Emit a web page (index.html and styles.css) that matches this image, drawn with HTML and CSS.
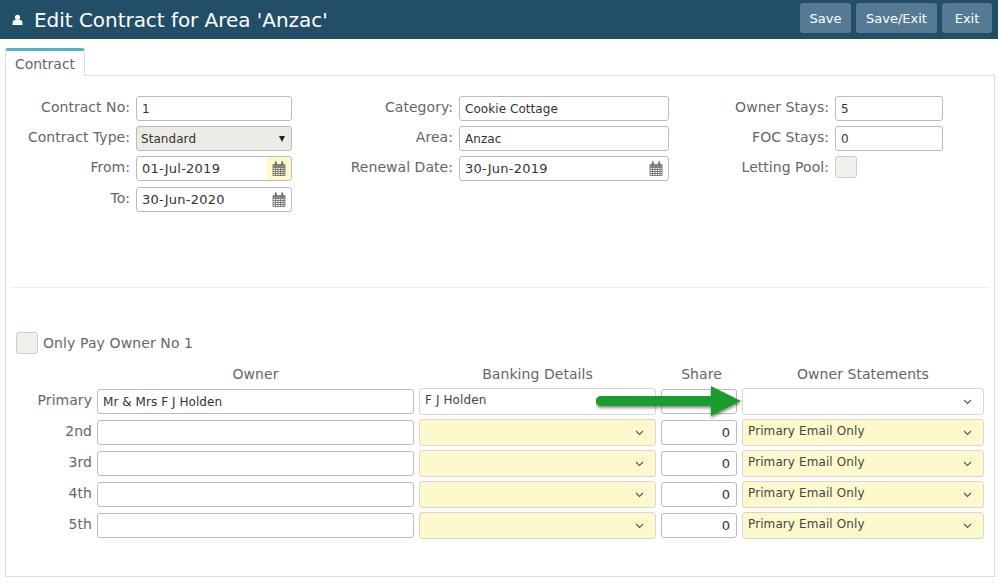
FILE: index.html
```html
<!DOCTYPE html>
<html lang="en">

<head>
    <meta charset="UTF-8">
    <meta name="viewport" content="width=device-width, initial-scale=1.0">
    <title>Edit Contract</title>
    <link rel="stylesheet" href="styles.css">
</head>

<body>
    <svg class="icon-defs" width="0" height="0">
        <symbol id="cal" viewBox="0 0 14 15">
            <path d="M1 3.500h12v11h-12z M1 6.500h12 M1 8.500h12 M1 10.500h12 M1 12.500h12 M3.500 6.500v8 M6 6.500v8 M8.500 6.500v8 M11 6.500v8" fill="none" stroke="#666" stroke-width="0.8" />
            <path d="M1 3.500h12v3h-12z" fill="#888" />
            <path d="M3.800 1.200v2.600 M10.200 1.200v2.600" fill="none" stroke="#666" stroke-width="1.800" stroke-linecap="round" />
        </symbol>
        <symbol id="chev" viewBox="0 0 9 6">
            <path d="M1 1l3.500 3.500L8 1" fill="none" stroke="#555" stroke-width="1.100" />
        </symbol>
    </svg>

    <header class="top-bar">
        <h1 class="page-title">
            <svg class="user-icon" viewBox="0 0 12 12" width="11" height="12">
                <circle cx="6" cy="3" r="2.800" fill="#fff" />
                <path d="M0.600 11.500v-2.600c0-2 1.600-3.200 3-3.200h4.800c1.400 0 3 1.200 3 3.200v2.600z" fill="#fff" />
            </svg>
            Edit Contract for Area 'Anzac'
        </h1>
        <div class="top-actions">
            <button class="btn btn-save">Save</button>
            <button class="btn btn-saveexit">Save/Exit</button>
            <button class="btn btn-exit">Exit</button>
        </div>
    </header>

    <div class="tabs">
        <div class="tab">Contract</div>
    </div>

    <main class="panel">
        <section class="details">
            <div class="form-col col-one">
                <label>Contract No:</label>
                <div class="field">1</div>
                <label>Contract Type:</label>
                <div class="field field-select">Standard<span class="caret"></span></div>
                <label>From:</label>
                <div class="field date-field">01-Jul-2019<span class="cal-box cal-active"><svg width="14" height="15"><use href="#cal" /></svg></span></div>
                <label class="gap-row">To:</label>
                <div class="field date-field gap-row">30-Jun-2020<span class="cal-box"><svg width="14" height="15"><use href="#cal" /></svg></span></div>
            </div>
            <div class="form-col col-two">
                <label>Category:</label>
                <div class="field">Cookie Cottage</div>
                <label>Area:</label>
                <div class="field">Anzac</div>
                <label>Renewal Date:</label>
                <div class="field date-field">30-Jun-2019<span class="cal-box"><svg width="14" height="15"><use href="#cal" /></svg></span></div>
            </div>
            <div class="form-col col-three">
                <label>Owner Stays:</label>
                <div class="field">5</div>
                <label>FOC Stays:</label>
                <div class="field">0</div>
                <label>Letting Pool:</label>
                <div class="checkbox"></div>
            </div>
        </section>

        <hr class="divider">

        <div class="only-pay">
            <div class="checkbox"></div>
            <span>Only Pay Owner No 1</span>
        </div>

        <section class="owners">
            <div></div>
            <div class="col-head">Owner</div>
            <div class="col-head">Banking Details</div>
            <div class="col-head col-head-share">Share</div>
            <div class="col-head">Owner Statements</div>

            <label>Primary</label>
            <div class="field">Mr &amp; Mrs F J Holden</div>
            <div class="drop">F J Holden</div>
            <div class="field share"></div>
            <div class="drop">&nbsp;<svg class="chev" width="9" height="6"><use href="#chev" /></svg></div>

            <label>2nd</label>
            <div class="field"></div>
            <div class="drop drop-req"><svg class="chev" width="9" height="6"><use href="#chev" /></svg></div>
            <div class="field share">0</div>
            <div class="drop drop-req">Primary Email Only<svg class="chev" width="9" height="6"><use href="#chev" /></svg></div>

            <label>3rd</label>
            <div class="field"></div>
            <div class="drop drop-req"><svg class="chev" width="9" height="6"><use href="#chev" /></svg></div>
            <div class="field share">0</div>
            <div class="drop drop-req">Primary Email Only<svg class="chev" width="9" height="6"><use href="#chev" /></svg></div>

            <label>4th</label>
            <div class="field"></div>
            <div class="drop drop-req"><svg class="chev" width="9" height="6"><use href="#chev" /></svg></div>
            <div class="field share">0</div>
            <div class="drop drop-req">Primary Email Only<svg class="chev" width="9" height="6"><use href="#chev" /></svg></div>

            <label>5th</label>
            <div class="field"></div>
            <div class="drop drop-req"><svg class="chev" width="9" height="6"><use href="#chev" /></svg></div>
            <div class="field share">0</div>
            <div class="drop drop-req">Primary Email Only<svg class="chev" width="9" height="6"><use href="#chev" /></svg></div>
        </section>
    </main>

    <!-- annotation arrow over the primary row -->
    <svg class="arrow" viewBox="0 0 150 38" width="150" height="38">
        <defs>
            <filter id="arrow-shadow" x="-10%" y="-30%" width="120%" height="170%">
                <feDropShadow dx="0" dy="2" stdDeviation="1.500" flood-color="#000" flood-opacity="0.450" />
            </filter>
        </defs>
        <path d="M4.800 13h110.200v-10l30 15-30 15v-10h-110.200a5 5 0 0 1 0-10z" fill="#1c9c2f" filter="url(#arrow-shadow)" />
    </svg>
</body>

</html>
```
FILE: styles.css
```css
body {
    margin: 0;
    padding: 0;
    background-color: #fff;
    font-family: "DejaVu Sans", Verdana, sans-serif;
    font-size: 14px;
    color: #666;
    position: relative;
    height: 583px;
    overflow: hidden;
}

.icon-defs {
    position: absolute;
}

.top-bar {
    display: flex;
    justify-content: space-between;
    align-items: flex-start;
    height: 39px;
    background-color: #234e67;
    padding: 3px 6px 0 12px;
    box-sizing: border-box;
}

.page-title {
    margin: 0;
    display: flex;
    align-items: center;
    gap: 11px;
    height: 34px;
    color: #fff;
    font-size: 20px;
    font-weight: normal;
    letter-spacing: -0.04px;
    white-space: nowrap;
}

.top-actions {
    display: flex;
    gap: 5px;
}

.btn {
    height: 30px;
    border: 0;
    border-radius: 3px;
    background-color: #557b94;
    color: #fff;
    font-family: inherit;
    font-size: 13px;
    padding: 0;
}

.btn-save {
    width: 51px;
}

.btn-saveexit {
    width: 81px;
}

.btn-exit {
    width: 50px;
}

.tabs {
    display: flex;
    padding: 9px 0 0 5px;
}

.tab {
    width: 80px;
    height: 28px;
    box-sizing: border-box;
    border: 1px solid #ddd;
    border-top: 3px solid #53b3c0;
    border-bottom: 0;
    border-radius: 3px 3px 0 0;
    background: #fff;
    text-align: center;
    line-height: 26px;
    margin-bottom: -1px;
    position: relative;
}

.panel {
    margin: 0 3px 0 5px;
    height: 502px;
    box-sizing: border-box;
    border: 1px solid #ddd;
}

.details {
    display: flex;
    height: 211px;
    padding-top: 20px;
    box-sizing: border-box;
}

.form-col {
    display: grid;
    align-content: start;
    row-gap: 5px;
    column-gap: 6px;
}

.col-one {
    grid-template-columns: 124px 156px;
}

.col-two {
    grid-template-columns: 161px 210px;
}

.col-three {
    grid-template-columns: 160px 108px;
}

label {
    text-align: right;
    line-height: 23px;
    letter-spacing: 0.04px;
    white-space: nowrap;
}

.gap-row {
    margin-top: 1px;
}

.field {
    height: 25px;
    box-sizing: border-box;
    border: 1px solid #bbb;
    border-radius: 3px;
    background: #fff;
    color: #333;
    font-size: 12px;
    letter-spacing: 0.06px;
    line-height: 24px;
    padding: 0 5px;
    display: flex;
    align-items: center;
    justify-content: space-between;
    overflow: hidden;
}

.field-select {
    background: #ebebe4;
    padding-left: 4px;
}

.caret {
    width: 0;
    height: 0;
    border-left: 3px solid transparent;
    border-right: 3px solid transparent;
    border-top: 6px solid #222;
    margin-right: 1px;
}

.date-field {
    padding-right: 0;
    font-size: 13px;
    letter-spacing: 0.25px;
}

.cal-box {
    width: 24px;
    height: 23px;
    display: flex;
    align-items: center;
    justify-content: center;
}

.cal-active {
    background: #fdf9cd;
}

.checkbox {
    width: 22px;
    height: 22px;
    box-sizing: border-box;
    border: 1px solid #ccc;
    border-radius: 3px;
    background: #f1f1ec;
}

.divider {
    border: 0;
    border-top: 1px solid #eee;
    margin: 0 6px;
    height: 0;
}

.only-pay {
    display: flex;
    align-items: center;
    gap: 5px;
    margin: 44px 0 0 10px;
    letter-spacing: 0.1px;
}

.owners {
    display: grid;
    grid-template-columns: 85px 317px 237px 76px 242px;
    grid-auto-rows: 31px;
    column-gap: 5px;
    align-items: center;
    margin: 1px 0 0 1px;
}

.owners label {
    line-height: 20px;
    margin-bottom: 3px;
}

.col-head {
    text-align: center;
    align-self: end;
    margin-bottom: 4px;
    letter-spacing: 0.05px;
}

.col-head-share {
    padding-left: 5px;
}

.share {
    justify-content: flex-end;
    font-size: 13px;
    padding-right: 6px;
}

.drop {
    height: 27px;
    box-sizing: border-box;
    border: 1px solid #d6d6d6;
    border-radius: 3px;
    background: #fff;
    color: #444;
    font-size: 12px;
    letter-spacing: 0.1px;
    padding: 2px 11px 0 5px;
    line-height: 18px;
    display: flex;
    justify-content: space-between;
}

.drop-req {
    background: #fdf9cd;
}

.drop-req .chev:only-child {
    margin-left: auto;
}

.chev {
    margin-top: 8px;
}

.arrow {
    position: absolute;
    left: 596px;
    top: 383px;
}
```
